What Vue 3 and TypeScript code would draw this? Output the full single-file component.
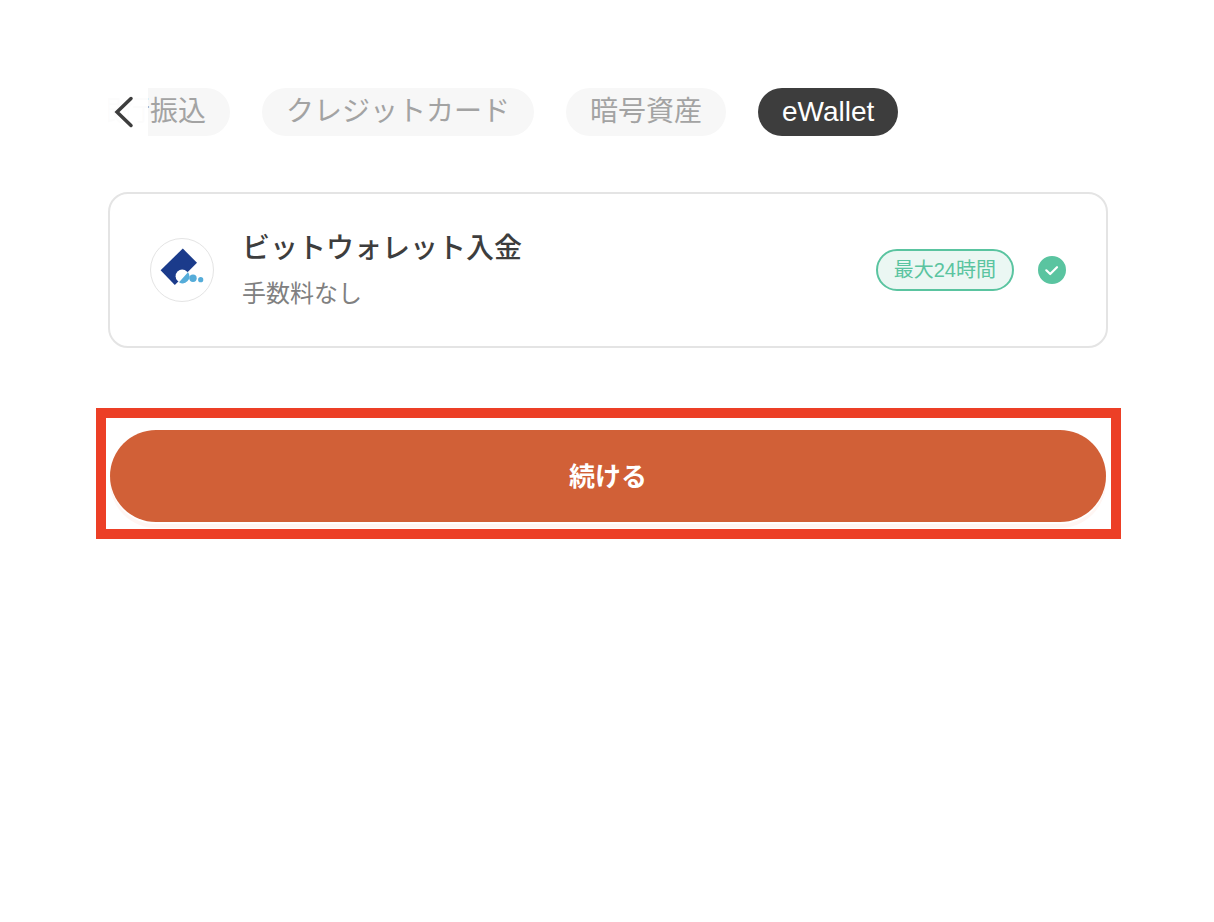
<script setup lang="ts">
import { ref } from 'vue'

const tabs: string[] = ['銀行振込', 'クレジットカード', '暗号資産', 'eWallet']
const active = ref<string>('eWallet')
const selected = ref<boolean>(true)
</script>

<template>
  <main class="page">
    <nav class="tabs" aria-label="入金方法">
      <div class="track">
        <button
          v-for="tab in tabs"
          :key="tab"
          type="button"
          class="tab"
          :class="{ active: tab === active }"
          @click="active = tab"
        >{{ tab }}</button>
      </div>
      <button type="button" class="back" aria-label="戻る">
        <svg width="40" height="48" viewBox="0 0 40 48" fill="none">
          <path d="M23 10.500 9 24 23 37.500" stroke="#3d3d3d" stroke-width="3.500" stroke-linecap="round" stroke-linejoin="miter" />
        </svg>
      </button>
    </nav>

    <label class="card">
      <span class="logo">
        <svg width="62" height="62" viewBox="0 0 62 62">
          <path d="M31.800 9.500 46 23.800 23.800 46 9.600 31.300z" fill="#1b3b8b" />
          <circle cx="31.200" cy="37.200" r="6.600" fill="#fff" />
          <path d="M37 33.300A6.800 6.800 0 0 1 28 43.200z" fill="#55acd9" />
          <circle cx="42" cy="39.300" r="3.700" fill="#55acd9" />
          <circle cx="49.700" cy="40.700" r="2.600" fill="#55acd9" />
        </svg>
      </span>
      <span class="info">
        <span class="title">ビットウォレット入金</span>
        <span class="fee">手数料なし</span>
      </span>
      <span class="badge">最大24時間</span>
      <span class="check">
        <input v-model="selected" type="checkbox" aria-label="ビットウォレット入金" />
        <svg v-if="selected" width="28" height="28" viewBox="0 0 28 28" fill="none">
          <path d="M8.300 14.300 12.200 18 19 11.200" stroke="#fff" stroke-width="2.200" stroke-linecap="round" stroke-linejoin="round" />
        </svg>
      </span>
    </label>

    <div class="highlight">
      <button type="button" class="continue">続ける</button>
    </div>
  </main>
</template>

<style>
body {
  background: #fff;
}
</style>

<style scoped>
.page {
  box-sizing: border-box;
  padding: 88px 106px 40px 108px;
  font-family: "Liberation Sans", "Noto Sans CJK JP", sans-serif;
  color: #3d3d3d;
}

button {
  border: 0;
  margin: 0;
  padding: 0;
  font-family: inherit;
  cursor: pointer;
}

.tabs {
  position: relative;
  overflow: hidden;
}

.track {
  display: flex;
  gap: 32px;
  margin-left: -38px;
}

.tab {
  flex: none;
  height: 48px;
  padding: 0 24px;
  border-radius: 24px;
  background: #f7f7f7;
  color: #a3a3a3;
  font-size: 28px;
  line-height: 48px;
  white-space: nowrap;
}

.tab.active {
  background: #3d3d3d;
  color: #fff;
}

.back {
  position: absolute;
  left: 0;
  top: 0;
  width: 40px;
  height: 48px;
  background: rgba(255, 255, 255, 0.97);
}

.back svg,
.logo svg,
.check svg {
  display: block;
}

.card {
  box-sizing: border-box;
  display: flex;
  align-items: center;
  margin-top: 56px;
  min-height: 156px;
  padding: 32px 40px;
  border: 2px solid #e4e4e4;
  border-radius: 20px;
  cursor: pointer;
}

.logo {
  flex: none;
  border: 1px solid #e4e4e4;
  border-radius: 50%;
  overflow: hidden;
}

.info {
  flex: 1;
  display: flex;
  flex-direction: column;
  margin-left: 28px;
  gap: 4px;
}

.title {
  font-size: 28px;
  font-weight: 500;
  line-height: 44px;
}

.fee {
  color: #808080;
  font-size: 24px;
  line-height: 38px;
}

.badge {
  padding: 0 16px;
  border: 2px solid #5ac4a0;
  border-radius: 21px;
  background: #ebf7f3;
  color: #5ac4a0;
  font-size: 20px;
  line-height: 38px;
}

.check {
  position: relative;
  margin-left: 24px;
}

.check input {
  display: block;
  appearance: none;
  width: 28px;
  height: 28px;
  margin: 0;
  border: 2px solid #5ac4a0;
  border-radius: 50%;
}

.check input:checked {
  background: #5ac4a0;
}

.check svg {
  position: absolute;
  left: 0;
  top: 0;
  pointer-events: none;
}

.highlight {
  margin: 60px -13px 0 -12px;
  padding: 12px 5px 7px 4px;
  border: 10px solid #ec3f26;
}

.continue {
  display: block;
  width: 100%;
  height: 92px;
  padding-bottom: 4px;
  border-radius: 46px;
  background: #d16037;
  box-shadow: 0 2px 0 #fff, 0 6px 0 #fff6f3;
  color: #fff;
  font-size: 26px;
  font-weight: 700;
}
</style>
